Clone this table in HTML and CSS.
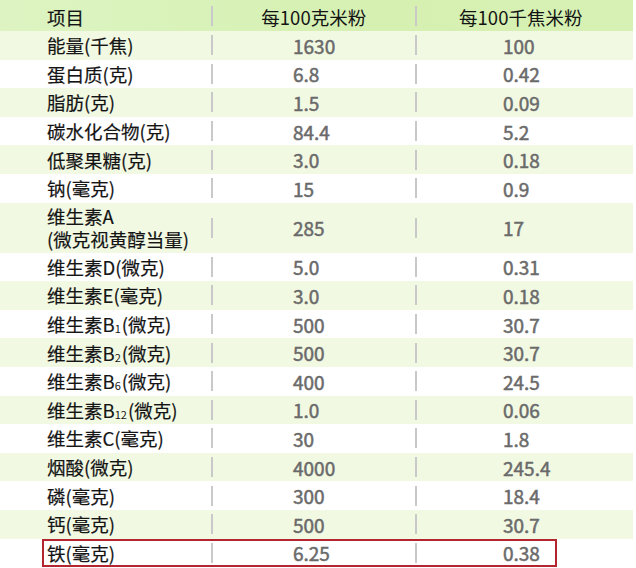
FILE: index.html
```html
<!DOCTYPE html>
<html lang="zh-CN">
<head>
<meta charset="utf-8">
<link rel="stylesheet" href="styles.css">
</head>
<body>
<div class="table">
  <div class="row head">
    <div class="c1">项目</div>
    <div class="c2"><span class="ht">每100克米粉</span></div>
    <div class="c3"><span class="ht">每100千焦米粉</span></div>
  </div>
  <div class="row g"><div class="c1">能量(千焦)</div><div class="c2"><span class="v">1630</span></div><div class="c3"><span class="v">100</span></div></div>
  <div class="row"><div class="c1">蛋白质(克)</div><div class="c2"><span class="v">6.8</span></div><div class="c3"><span class="v">0.42</span></div></div>
  <div class="row g"><div class="c1">脂肪(克)</div><div class="c2"><span class="v">1.5</span></div><div class="c3"><span class="v">0.09</span></div></div>
  <div class="row"><div class="c1">碳水化合物(克)</div><div class="c2"><span class="v">84.4</span></div><div class="c3"><span class="v">5.2</span></div></div>
  <div class="row g"><div class="c1">低聚果糖(克)</div><div class="c2"><span class="v">3.0</span></div><div class="c3"><span class="v">0.18</span></div></div>
  <div class="row"><div class="c1">钠(毫克)</div><div class="c2"><span class="v">15</span></div><div class="c3"><span class="v">0.9</span></div></div>
  <div class="row g tall"><div class="c1 two"><span class="ln">维生素A</span><span class="ln">(微克视黄醇当量)</span></div><div class="c2"><span class="v">285</span></div><div class="c3"><span class="v">17</span></div></div>
  <div class="row"><div class="c1">维生素D(微克)</div><div class="c2"><span class="v">5.0</span></div><div class="c3"><span class="v">0.31</span></div></div>
  <div class="row g"><div class="c1">维生素E(毫克)</div><div class="c2"><span class="v">3.0</span></div><div class="c3"><span class="v">0.18</span></div></div>
  <div class="row"><div class="c1">维生素B<span class="sub">1</span>(微克)</div><div class="c2"><span class="v">500</span></div><div class="c3"><span class="v">30.7</span></div></div>
  <div class="row g"><div class="c1">维生素B<span class="sub">2</span>(微克)</div><div class="c2"><span class="v">500</span></div><div class="c3"><span class="v">30.7</span></div></div>
  <div class="row"><div class="c1">维生素B<span class="sub">6</span>(微克)</div><div class="c2"><span class="v">400</span></div><div class="c3"><span class="v">24.5</span></div></div>
  <div class="row g"><div class="c1">维生素B<span class="sub">12</span>(微克)</div><div class="c2"><span class="v">1.0</span></div><div class="c3"><span class="v">0.06</span></div></div>
  <div class="row"><div class="c1">维生素C(毫克)</div><div class="c2"><span class="v">30</span></div><div class="c3"><span class="v">1.8</span></div></div>
  <div class="row g"><div class="c1">烟酸(微克)</div><div class="c2"><span class="v">4000</span></div><div class="c3"><span class="v">245.4</span></div></div>
  <div class="row"><div class="c1">磷(毫克)</div><div class="c2"><span class="v">300</span></div><div class="c3"><span class="v">18.4</span></div></div>
  <div class="row g"><div class="c1">钙(毫克)</div><div class="c2"><span class="v">500</span></div><div class="c3"><span class="v">30.7</span></div></div>
  <div class="row hl"><div class="c1">铁(毫克)</div><div class="c2"><span class="v">6.25</span></div><div class="c3"><span class="v">0.38</span></div></div>
</div>
</body>
</html>
```

FILE: styles.css
```css
html, body {
  margin: 0;
  padding: 0;
  background: #ffffff;
}
body {
  font-family: "Noto Sans CJK SC", "Noto Sans", sans-serif;
  font-size: 18.5px;
  color: #141414;
  overflow: hidden;
}
.table {
  width: 633px;
}
.row {
  display: grid;
  grid-template-columns: 211px 204px 218px;
  height: 28.6px;
  position: relative;
}
.row.g {
  background: #f2f9e3;
}
.row.head {
  height: 31px;
  background: linear-gradient(90deg, #ddf4c2 0%, #d5f0b1 60%, #d6f1b3 100%);
}
.row.tall {
  height: 50px;
}
.c1, .c2, .c3 {
  display: flex;
  align-items: center;
  white-space: nowrap;
}
.c1 {
  padding-left: 47px;
  -webkit-text-stroke: 0.2px #141414;
}
.c1.two {
  flex-direction: column;
  align-items: flex-start;
  justify-content: center;
}
.ln {
  display: block;
  height: 23px;
  line-height: 23px;
}
.c2::before, .c3::before {
  content: "";
  flex: none;
  width: 1.5px;
  height: 20px;
  background: #c9c9c9;
}
.head .c1, .head .ht {
  padding-top: 2px;
}
.ht {
  flex: 1;
  text-align: center;
}
.head .c3 .ht {
  padding-right: 8px;
}
.v {
  font-family: "Noto Sans CJK SC", "Noto Sans", sans-serif;
  color: #6a6a6a;
  font-size: 19px;
  -webkit-text-stroke: 0.5px #6a6a6a;
}
.c2 .v {
  margin-left: 80.5px;
}
.c3 .v {
  margin-left: 86.5px;
}
.sub {
  font-size: 11px;
  position: relative;
  top: 4px;
  margin-right: 1px;
  -webkit-text-stroke: 0;
}
.row.hl::after {
  content: "";
  position: absolute;
  left: 42px;
  width: 515px;
  top: 0;
  bottom: 0;
  border: 2px solid #b3262f;
  box-sizing: border-box;
  pointer-events: none;
}
```
